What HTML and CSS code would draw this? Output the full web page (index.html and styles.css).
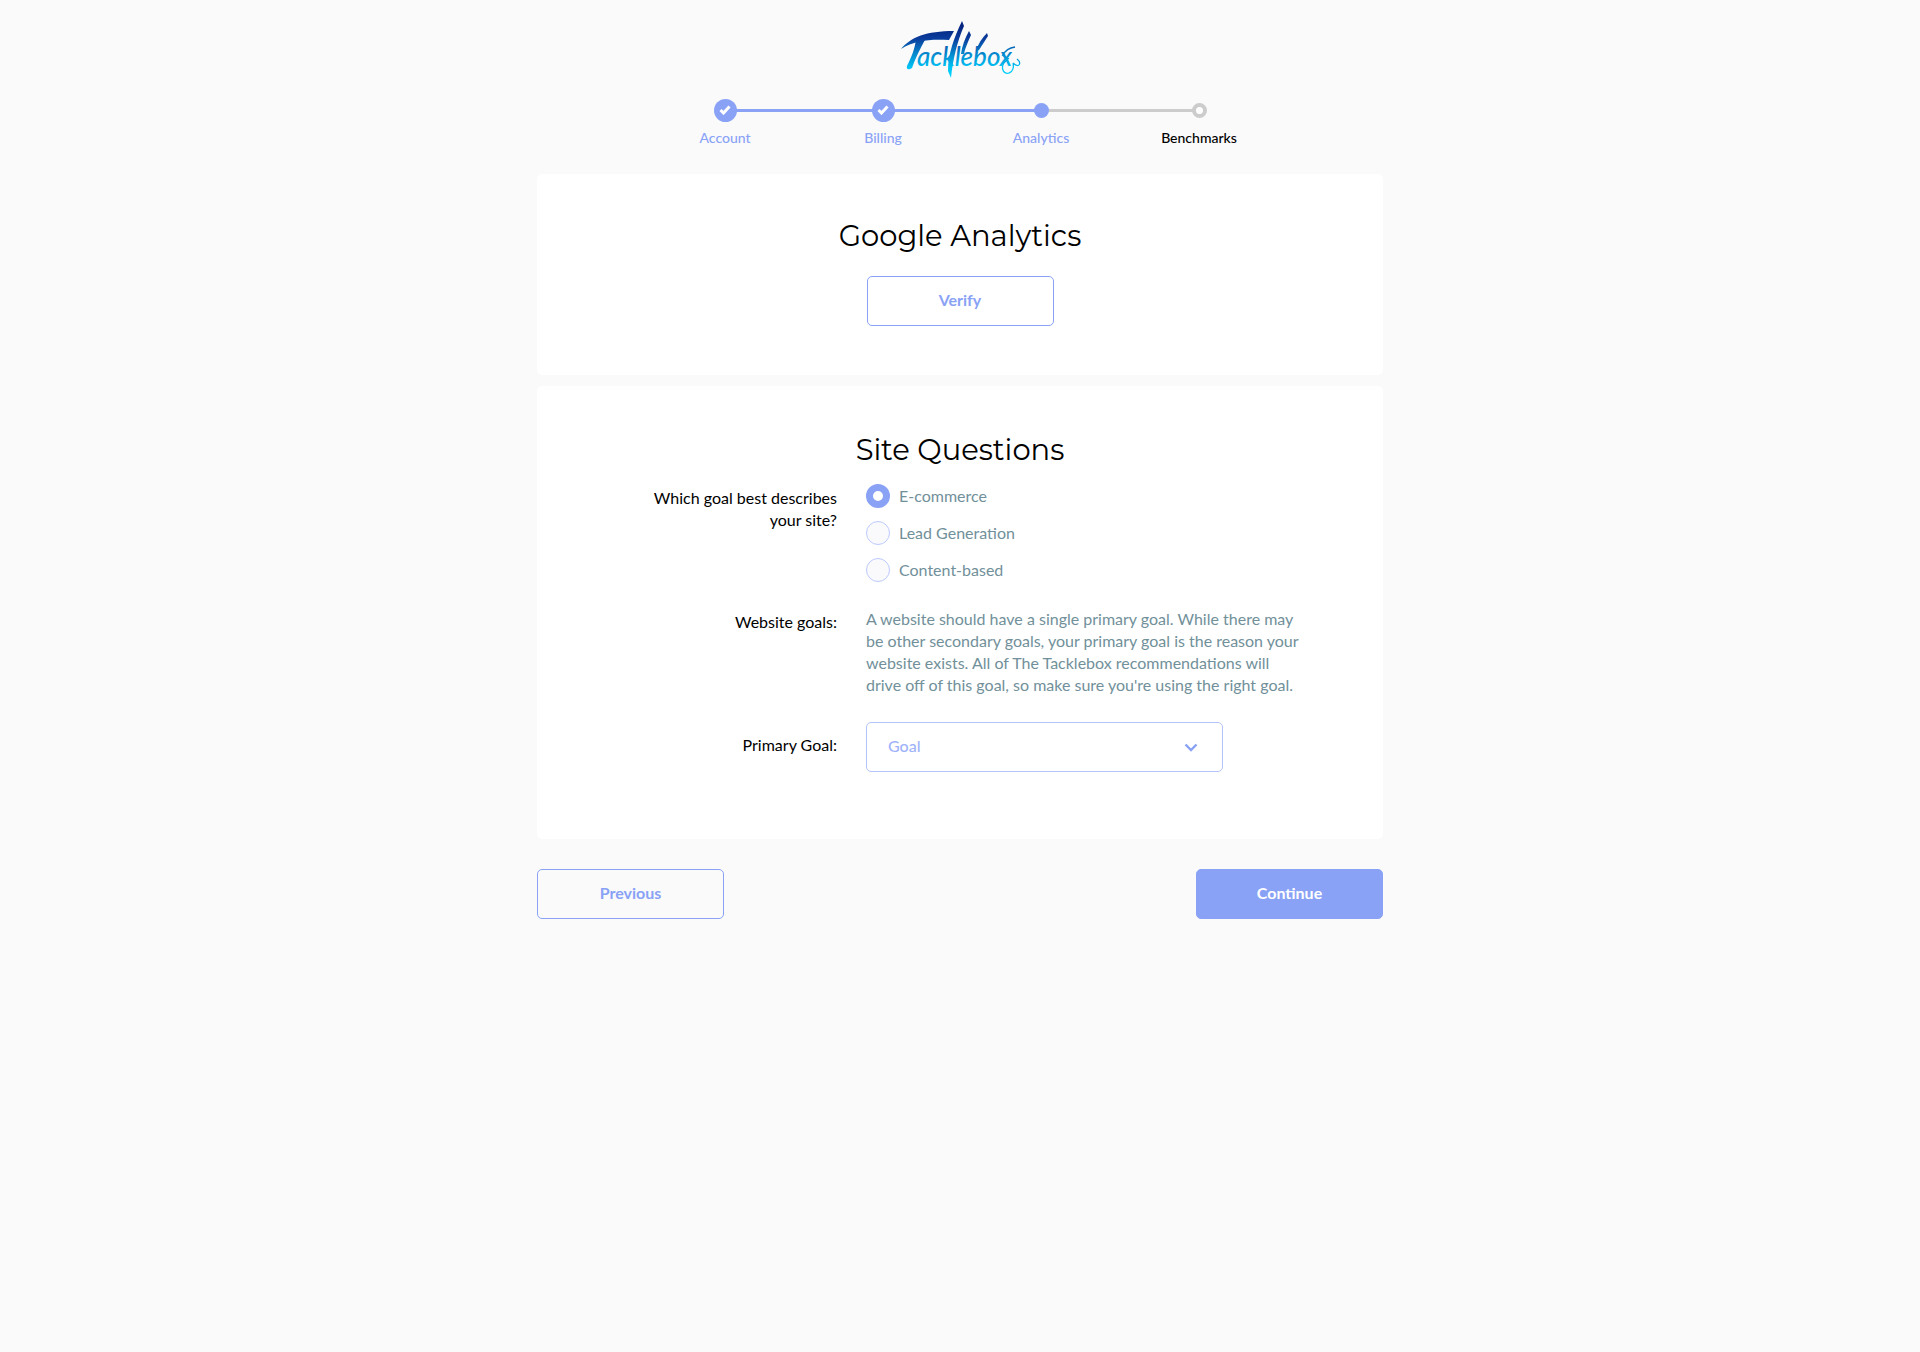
FILE: index.html
```html
<!DOCTYPE html>
<html lang="en">
<head>
<meta charset="utf-8">
<title>Tacklebox – Analytics</title>
<link rel="stylesheet" href="styles.css">
</head>
<body>
<header class="header">
  <a class="logo" href="#" aria-label="Tacklebox">
    <svg width="122" height="62" viewBox="0 0 122 62" aria-hidden="true">
      <defs>
        <linearGradient id="water" gradientUnits="userSpaceOnUse" x1="0" y1="6" x2="0" y2="56">
          <stop offset="0" stop-color="#06247f"/>
          <stop offset=".25" stop-color="#0a3c9c"/>
          <stop offset=".55" stop-color="#0586cc"/>
          <stop offset=".85" stop-color="#00c8f8"/>
          <stop offset="1" stop-color="#00d2fb"/>
        </linearGradient>
      </defs>
      <g fill="url(#water)">
        <path d="M2 29C12 17 27 11 55 11L50 20C32 19 16 20 2 29Z"/>
        <path d="M17 19L27 18C21 29 16 39 13 48C10 50 7 50 8 46C12 38 16 29 17 19Z"/>
        <path d="M63 1L65 6C58 22 54 39 52 58L49 51C49 34 55 18 63 1Z"/>
        <path d="M70 11L72 15C69 22 66 28 65 34L62 34C63 26 66 18 70 11Z"/>
        <path d="M88 13L89 16L80 30L77 31C79 24 83 18 88 13Z"/>
        <text class="logo-word" x="18" y="46">acklebox</text>
      </g>
      <path d="M103 35L110 39M116 27C110 28 106 31 104 35M108 40C100 46 104 55 110 53C114 52 115 47 114 43M114 43C120 49 123 43 118 39" fill="none" stroke="url(#water)" stroke-width="1.300"/>
    </svg>
  </a>
  <ol class="steps">
    <li class="step done">
      <span class="marker"><svg width="12" height="10" viewBox="0 0 12 10" aria-hidden="true"><path d="M1.500 5L4.500 8L10.500 1.500" fill="none" stroke="#fff" stroke-width="3"/></svg></span>
      <span class="step-name">Account</span>
    </li>
    <li class="step done">
      <span class="marker"><svg width="12" height="10" viewBox="0 0 12 10" aria-hidden="true"><path d="M1.500 5L4.500 8L10.500 1.500" fill="none" stroke="#fff" stroke-width="3"/></svg></span>
      <span class="step-name">Billing</span>
    </li>
    <li class="step current" aria-current="step"><span class="marker"></span><span class="step-name">Analytics</span></li>
    <li class="step upcoming"><span class="marker"></span><span class="step-name">Benchmarks</span></li>
  </ol>
</header>
<main class="page">
  <section class="card analytics">
    <h1 class="title">Google Analytics</h1>
    <button class="button" type="button">Verify</button>
  </section>
  <form class="wizard">
    <section class="card">
      <h2 class="title">Site Questions</h2>
      <div class="fields">
        <div class="label" id="goal-type">Which goal best describes your site?</div>
        <div class="options" role="radiogroup" aria-labelledby="goal-type">
          <label class="option"><input class="radio" type="radio" name="type" checked>E-commerce</label>
          <label class="option"><input class="radio" type="radio" name="type">Lead Generation</label>
          <label class="option"><input class="radio" type="radio" name="type">Content-based</label>
        </div>
        <div class="label">Website goals:</div>
        <p class="hint">A website should have a single primary goal. While there may be other secondary goals, your primary goal is the reason your website exists. All of The Tacklebox recommendations will drive off of this goal, so make sure you're using the right goal.</p>
        <label class="label label-select" for="goal">Primary Goal:</label>
        <div class="select-box">
          <select class="select" id="goal"><option>Goal</option></select>
          <svg class="chevron" width="14" height="9" viewBox="0 0 14 9" aria-hidden="true"><path d="M1.500 1.500L7 7L12.500 1.500" fill="none" stroke="#89a2f6" stroke-width="2.400"/></svg>
        </div>
      </div>
    </section>
    <div class="actions">
      <button class="button" type="button">Previous</button>
      <button class="button primary" type="submit">Continue</button>
    </div>
  </form>
</main>
</body>
</html>
```
FILE: styles.css
```css
* { box-sizing: border-box; }

body {
  margin: 0;
  background: #fafafa;
  color: #000;
  font: 16px/22px Lato, sans-serif;
}

.header {
  display: flex;
  flex-direction: column;
  align-items: center;
  padding: 20px 16px 0;
}

.logo { display: block; height: 62px; }
.logo svg { display: block; }
.logo-word { font: italic 500 26px Lato, sans-serif; }

.steps {
  display: grid;
  grid-template-columns: repeat(4, 1fr);
  width: 100%;
  max-width: 636px;
  margin: 16px 0 0;
  padding: 0 0 0 4px;
  list-style: none;
}

.step {
  display: grid;
  grid-template-rows: 24px 22px;
  row-gap: 5px;
  place-items: center;
  font-size: 14px;
  font-weight: 500;
  color: #89a2f6;
}

.marker,
.step::after { grid-row: 1; grid-column: 1; }

.step::after {
  content: "";
  width: 100%;
  height: 3px;
  background: #89a2f6;
  transform: translateX(50%);
}

.step:last-child::after { display: none; }
.current::after { background: #ccc; }

.marker {
  z-index: 1;
  display: grid;
  place-items: center;
  width: 15px;
  height: 15px;
  border-radius: 50%;
  background: #89a2f6;
}

.done .marker { width: 23px; height: 23px; }
.upcoming { color: #000; }
.upcoming .marker { border: 4px solid #ccc; background: #fff; }
.step-name { grid-row: 2; grid-column: 1; }

.page {
  max-width: 846px;
  margin: 25px auto 0;
}

.card {
  padding: 46px 0 67px;
  border-radius: 5px;
  background: #fff;
}

.analytics {
  margin-bottom: 11px;
  padding: 44px 0 49px;
  text-align: center;
}

.title {
  margin: 0 0 16px;
  font: 400 29px/36px Montserrat, Inter, sans-serif;
  text-align: center;
}

.analytics .title { margin-bottom: 22px; }

.button {
  width: 187px;
  height: 50px;
  padding: 0 0 2px;
  border: 1px solid #89a2f6;
  border-radius: 5px;
  background: transparent;
  color: #89a2f6;
  font: 700 16px/22px Lato, sans-serif;
  vertical-align: top;
}

.primary { background: #89a2f6; color: #fff; }

.fields {
  display: grid;
  grid-template-columns: 300px 1fr;
  gap: 26px 29px;
}

.label {
  padding: 3px 0 0 96px;
  text-align: right;
}

.label-select { padding-top: 12px; }

.options {
  display: grid;
  gap: 13px;
  color: #71909a;
}

.option {
  display: flex;
  align-items: center;
  gap: 9px;
  height: 24px;
}

.radio {
  appearance: none;
  width: 24px;
  height: 24px;
  margin: 0;
  border: 1px solid #bccafc;
  border-radius: 50%;
  background: #fafafc;
}

.radio:checked {
  border: 7px solid #89a2f6;
  background: #fff;
}

.hint {
  max-width: 434px;
  margin: 0;
  color: #71909a;
}

.select-box {
  display: grid;
  align-items: center;
  width: 357px;
}

.select,
.chevron { grid-area: 1 / 1; }

.select {
  appearance: none;
  width: 100%;
  height: 50px;
  padding: 0 21px 2px;
  border: 1px solid #b4c4fb;
  border-radius: 5px;
  background: #fff;
  color: #9fb3f9;
  font: 500 16px/22px Lato, sans-serif;
}

.chevron {
  justify-self: end;
  margin-right: 25px;
  pointer-events: none;
}

.actions {
  display: flex;
  justify-content: space-between;
  margin-top: 30px;
}
```
